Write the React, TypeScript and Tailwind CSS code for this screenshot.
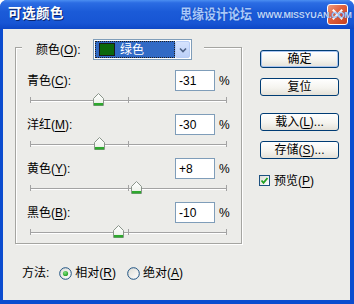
import React from "react";

const rows = [
  { name: "青色", k: "C", value: -31 },
  { name: "洋红", k: "M", value: -30 },
  { name: "黄色", k: "Y", value: 8 },
  { name: "黑色", k: "B", value: -10 },
];

function Acc({ k }: { k: string }) {
  return <span className="underline underline-offset-[2px] decoration-1">{k}</span>;
}

function Thumb() {
  return (
    <svg width="11" height="13" viewBox="0 0 11 13">
      <defs>
        <linearGradient id="tg" x1="0" y1="0" x2="0" y2="1">
          <stop offset="0" stopColor="#ffffff" />
          <stop offset="0.7" stopColor="#f1f4ee" />
          <stop offset="1" stopColor="#cfe8cf" />
        </linearGradient>
      </defs>
      <path d="M5.5 0.5 L10.5 5.5 L10.5 12.5 L0.5 12.5 L0.5 5.5 Z" fill="url(#tg)" stroke="#8a958a" />
      <rect x="1" y="10" width="9" height="2.5" fill="#2ea82e" />
    </svg>
  );
}

function Slider({ value }: { value: number }) {
  const x = 98 + (value / 100) * 98;
  return (
    <div className="relative mx-[14px] h-[23px] pt-[9px]">
      <div className="h-[2px] border-t border-t-[#a3a3a3] border-b border-b-white" />
      <div className="absolute left-0 top-[6px] w-px h-[6px] bg-[#a3a3a3]" />
      <div className="absolute left-[98px] top-[6px] w-px h-[6px] bg-[#a3a3a3]" />
      <div className="absolute right-0 top-[6px] w-px h-[6px] bg-[#a3a3a3]" />
      <div className="absolute top-[2px] leading-none" style={{ left: x - 5 }}>
        <Thumb />
      </div>
    </div>
  );
}

function Row({ name, k, value }: { name: string; k: string; value: number }) {
  return (
    <div>
      <div className="flex items-center h-[21px]">
        <span className="pl-[11px]">
          {name}(<Acc k={k} />):
        </span>
        <div className="ml-auto w-[40px] h-[21px] border border-[#7f9db9] bg-white pl-[3px] flex items-center">
          {value > 0 ? `+${value}` : `${value}`}
        </div>
        <span className="ml-[4px] w-[11px] mr-[11px]">%</span>
      </div>
      <Slider value={value} />
    </div>
  );
}

function XPButton({ children, def }: { children: React.ReactNode; def?: boolean }) {
  return (
    <div
      className={
        "w-[79px] h-[18px] rounded-[3px] border border-[#003c74] bg-[linear-gradient(180deg,#ffffff_0%,#f5f4ef_55%,#e4e1d8_100%)] flex items-center justify-center leading-none " +
        (def ? "shadow-[inset_0_0_0_1px_#a9c4f0]" : "")
      }
    >
      {children}
    </div>
  );
}

function Radio({ checked }: { checked?: boolean }) {
  return (
    <svg width="13" height="13" viewBox="0 0 13 13">
      <defs>
        <linearGradient id="rg" x1="0" y1="0" x2="1" y2="1">
          <stop offset="0" stopColor="#dcdcd5" />
          <stop offset="1" stopColor="#ffffff" />
        </linearGradient>
        <radialGradient id="rd" cx="0.4" cy="0.35" r="0.7">
          <stop offset="0" stopColor="#7ee07e" />
          <stop offset="1" stopColor="#1f9c1f" />
        </radialGradient>
      </defs>
      <circle cx="6.5" cy="6.5" r="5.8" fill="url(#rg)" stroke="#1c5180" strokeWidth="1" />
      {checked && <circle cx="6.5" cy="6.5" r="2.6" fill="url(#rd)" />}
    </svg>
  );
}

export default function App() {
  return (
    <div className="w-[354px] h-[304px] bg-[#0b4ccf] rounded-t-[7px] flex flex-col overflow-hidden text-[12px] text-black font-['Liberation_Sans','Noto_Sans_CJK_SC',sans-serif]">
      {/* Title bar */}
      <div className="relative h-[29px] shrink-0 flex items-center pl-[8px] pr-[6px] bg-[linear-gradient(180deg,#4b8ef1_0%,#2b6ce3_10%,#1b5bd8_40%,#1755d4_80%,#0e47c6_100%)]">
        <span className="text-white font-bold text-[13.5px] tracking-[0.5px] [text-shadow:1px_1px_0_#0a246a]">
          可选颜色
        </span>
        <div className="ml-auto w-[21px] h-[21px] rounded-[3px] border border-white bg-[linear-gradient(135deg,#ee9a7c_0%,#df5f3c_45%,#c7401d_100%)] flex items-center justify-center">
          <svg width="11" height="11" viewBox="0 0 11 11">
            <path d="M1.5 1.5 L9.5 9.5 M9.5 1.5 L1.5 9.5" stroke="#ffffff" strokeWidth="2" strokeLinecap="square" />
          </svg>
        </div>
        <div className="absolute z-10 left-[180px] top-[7px] flex items-center whitespace-nowrap">
          <span className="w-[74px] text-[12px] leading-[15px] text-[#a9c9fa] font-bold origin-left scale-y-[1.15] [text-shadow:0_0_1px_#0f3ea8]">
            思缘设计论坛
          </span>
          <span className="ml-[3px] text-[9.5px] leading-[12px] font-bold text-[#bcd5fb] tracking-[-0.2px] origin-left scale-x-[0.94] [text-shadow:0_0_1px_#0f3ea8]">
            WWW.MISSYUAN.COM
          </span>
        </div>
      </div>

      {/* Body */}
      <div className="flex-1 ml-[3px] mr-[4px] mb-[4px] bg-[#ecece9] flex flex-col">
        <div className="flex items-start">
          {/* Group box */}
          <div className="mt-[18px] ml-[12px] w-[227px] h-[197px] border border-[#a5a5a1] shadow-[inset_1px_1px_0_#ffffff,1px_1px_0_#ffffff]">
            <div className="-mt-[9px] ml-[6px] w-[182px] h-[21px] bg-[#ecece9] flex items-center pl-[14px]">
              <span className="w-[57px]">
                颜色(<Acc k="O" />):
              </span>
              <div className="w-[99px] h-[21px] border border-[#7f9db9] bg-white flex p-[1px]">
                <div className="flex-1 flex items-center bg-[#316ac5] border border-dotted border-[#202020]">
                  <div className="ml-[3px] w-[16px] h-[13px] bg-[#0b680b] border border-[#1a1a1a]" />
                  <span className="ml-[5px] text-white">绿色</span>
                </div>
                <div className="w-[15px] rounded-[2px] border border-[#b8cdf5] bg-[linear-gradient(180deg,#d6e3fd_0%,#bcd0f8_100%)] flex items-center justify-center">
                  <svg width="8" height="6" viewBox="0 0 8 6">
                    <path d="M1 1.5 L4 4.5 L7 1.5" fill="none" stroke="#4d6185" strokeWidth="1.6" />
                  </svg>
                </div>
              </div>
            </div>
            <div className="mt-[10px]">
              {rows.map((r) => (
                <Row key={r.k} name={r.name} k={r.k} value={r.value} />
              ))}
            </div>
          </div>

          {/* Buttons */}
          <div className="ml-[18px] mt-[21px] flex flex-col">
            <XPButton def>确定</XPButton>
            <div className="mt-[10px]">
              <XPButton>复位</XPButton>
            </div>
            <div className="mt-[17px]">
              <XPButton>
                载入(<Acc k="L" />)...
              </XPButton>
            </div>
            <div className="mt-[10px]">
              <XPButton>
                存储(<Acc k="S" />)...
              </XPButton>
            </div>
            <div className="mt-[15px] -ml-[1px] flex items-center h-[13px]">
              <div className="w-[11px] h-[11px] border border-[#1c5180] bg-[linear-gradient(135deg,#dcdcd5_0%,#ffffff_100%)] flex items-center justify-center">
                <svg width="9" height="9" viewBox="0 0 9 9">
                  <path d="M1.5 4.5 L3.5 6.8 L7.5 2" fill="none" stroke="#21a121" strokeWidth="1.8" />
                </svg>
              </div>
              <span className="ml-[4px]">
                预览(<Acc k="P" />)
              </span>
            </div>
          </div>
        </div>

        {/* Method row */}
        <div className="mt-[21px] pl-[19px] flex items-center h-[16px]">
          <span>方法:</span>
          <span className="ml-[10px] flex items-center">
            <Radio checked />
          </span>
          <span className="ml-[3px]">
            相对(<Acc k="R" />)
          </span>
          <span className="ml-[11px] flex items-center">
            <Radio />
          </span>
          <span className="ml-[3px]">
            绝对(<Acc k="A" />)
          </span>
        </div>
      </div>
    </div>
  );
}
